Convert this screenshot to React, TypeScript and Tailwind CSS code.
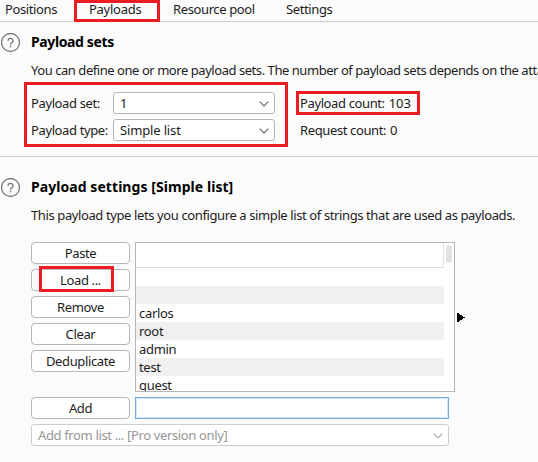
import React from "react";

function HelpIcon() {
  return (
    <svg width="20" height="20" viewBox="0 0 20 20" fill="none" stroke="#777777" className="shrink-0">
      <circle cx="9.5" cy="9.5" r="9" strokeWidth="1.3" />
      <path d="M7 7.7a2.5 2.4 0 1 1 4 2c-1 .7-1.5 1-1.5 2" strokeWidth="1.4" />
      <path d="M9.5 12.7v1.6" strokeWidth="1.5" />
    </svg>
  );
}

function Select({ value, className, muted = false }: { value: string; className: string; muted?: boolean }) {
  return (
    <div
      className={`flex h-[22px] items-center justify-between rounded-[3px] border bg-white pr-[5px] pl-[6px] ${muted ? "border-[#cccccc] text-[#969696]" : "border-[#b9b4b5]"} ${className}`}
    >
      <span className={muted ? "tracking-[-0.36px]" : "tracking-[-0.15px]"}>{value}</span>
      <svg width="10" height="6" viewBox="0 0 10 6" fill="none" stroke={muted ? "#aaaaaa" : "#666666"} strokeWidth="1.1" className="mt-px">
        <path d="M.7.7 5 5 9.3.7" />
      </svg>
    </div>
  );
}

function Button({ children }: { children: React.ReactNode }) {
  return (
    <button className="flex h-[22px] w-[99px] items-center justify-center rounded-[4px] border border-[#b9b4b5] bg-white tracking-[-0.36px]">
      {children}
    </button>
  );
}

function Mark({ className }: { className: string }) {
  return <div className={`pointer-events-none absolute border-3 border-[#ed1c24] ${className}`} />;
}

const items = ["", "", "carlos", "root", "admin", "test", "guest"];

export default function App() {
  return (
    <div className="h-[462px] w-[538px] overflow-hidden bg-[#fbfbfb] font-['Noto_Sans',sans-serif] text-[13px] leading-[18px] tracking-[-0.38px] whitespace-nowrap text-[#1c1c1c]">
      <nav className="relative flex h-[22px] border-b border-[#cccccc] pl-[5px]">
        <span className="w-[84px]">Positions</span>
        <span className="w-[84px] tracking-[-0.27px]">Payloads</span>
        <span className="w-[113px]">Resource pool</span>
        <span>Settings</span>
        <Mark className="top-0 left-[74px] h-[22px] w-[86px]" />
      </nav>

      <section className="flex h-[135px] border-b border-[#cccccc] pt-[11px]">
        <div className="w-[31px] shrink-0 pl-[1px]">
          <HelpIcon />
        </div>
        <div>
          <h2 className="h-[28px] text-[14px] font-bold text-black">Payload sets</h2>
          <p className="h-[31px] tracking-[-0.45px]">You can define one or more payload sets. The number of payload sets depends on the atta</p>
          <div className="relative grid w-[400px] grid-cols-[82px_187px_1fr] gap-y-[5px]">
            <span className="h-[22px] leading-[23px]">Payload set:</span>
            <Select value="1" className="w-[162px]" />
            <span className="flex h-[22px] gap-[4px] leading-[23px]">
              <span>Payload count:</span>
              <span className="tracking-[-0.1px]">103</span>
            </span>
            <span className="h-[22px] leading-[23px]">Payload type:</span>
            <Select value="Simple list" className="w-[162px]" />
            <span className="flex h-[22px] gap-[4px] leading-[23px]">
              <span>Request count:</span>
              <span>0</span>
            </span>
            <Mark className="-top-[10px] -left-[7px] h-[65px] w-[264px]" />
            <Mark className="-top-[1px] left-[265px] h-[24px] w-[124px]" />
          </div>
        </div>
      </section>

      <section className="flex pt-[21px]">
        <div className="w-[31px] shrink-0 pl-[1px]">
          <HelpIcon />
        </div>
        <div>
          <h2 className="h-[28px] text-[14px] font-bold tracking-[0.06px] text-black">Payload settings [Simple list]</h2>
          <p className="h-[36px] tracking-[-0.39px]">This payload type lets you configure a simple list of strings that are used as payloads.</p>
          <div className="flex h-[155px] gap-[5px]">
            <div className="relative flex flex-col gap-[5px]">
              <Button>Paste</Button>
              <Button>Load ...</Button>
              <Button>Remove</Button>
              <Button>Clear</Button>
              <Button>Deduplicate</Button>
              <Mark className="top-[24px] left-[8px] h-[26px] w-[75px]" />
            </div>
            <div className="flex h-[150px] w-[320px] overflow-hidden border border-[#b9b4b5] bg-white">
              <div className="w-[308px]">
                <div className="h-[25px] border-r border-b border-[#e0e0e0]" />
                {items.map((item, index) => (
                  <div key={index} className={`h-[18px] pl-[3px] leading-[19px] tracking-[-0.32px] ${index % 2 === 1 ? "bg-[#f1f1f1]" : ""}`}>
                    {item}
                  </div>
                ))}
              </div>
              <div className="mt-[2px] ml-[2px] h-[18px] w-[6px] rounded-full bg-[#e2e2e2]" />
            </div>
            <svg width="8" height="9" viewBox="0 0 8 9" shapeRendering="crispEdges" className="mt-[71px] -ml-[3px]">
              <path d="M0 0h1L8 4.5 1 9H0z" />
            </svg>
          </div>
          <div className="mb-[5px] flex gap-[5px]">
            <Button>Add</Button>
            <div className="h-[22px] w-[314px] border border-[#79a9dc] bg-white shadow-[inset_0_0_0_1px_#d3e4f7]" />
          </div>
          <Select value="Add from list ... [Pro version only]" className="w-[418px]" muted />
        </div>
      </section>
    </div>
  );
}
